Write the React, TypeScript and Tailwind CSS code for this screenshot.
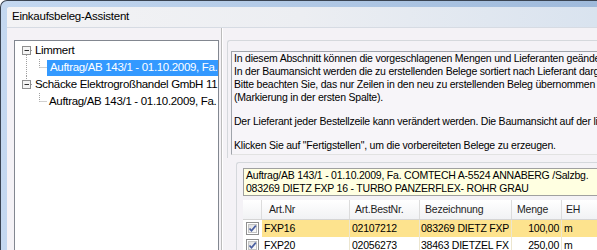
import React from 'react'

const rows = [
    { nr: 'FXP16', best: '02107212', bez: '083269 DIETZ FXP', menge: '100,00', eh: 'm', sel: true },
    { nr: 'FXP20', best: '02056273', bez: '38463 DIETZEL FX', menge: '250,00', eh: 'm', sel: false },
]

function Check() {
    return (
        <svg width="13" height="13" viewBox="0 0 13 13">
            <defs>
                <linearGradient id="cb" x1="0" y1="0" x2="1" y2="1">
                    <stop offset="0" stopColor="#dcdcdc" />
                    <stop offset="1" stopColor="#ffffff" />
                </linearGradient>
            </defs>
            <rect x="0.5" y="0.5" width="12" height="12" fill="#fff" stroke="#8f8f8f" />
            <rect x="2.5" y="2.5" width="8" height="8" fill="url(#cb)" stroke="#c4c4c4" />
            <path d="M3.5 6.5 L5.5 8.8 L9.8 3.6" fill="none" stroke="#4a5fa0" strokeWidth="1.7" />
        </svg>
    )
}

// +/- box with tree lines for root level items
function RootGlyph({ first }: { first: boolean }) {
    return (
        <svg width="18" height="17" className="shrink-0">
            {!first && <line x1="11.5" y1="0" x2="11.5" y2="4" stroke="#a0a0a0" strokeDasharray="1 1" />}
            {first && <line x1="11.5" y1="13" x2="11.5" y2="17" stroke="#a0a0a0" strokeDasharray="1 1" />}
            <line x1="16" y1="8.5" x2="18" y2="8.5" stroke="#a0a0a0" strokeDasharray="1 1" />
            <rect x="7.5" y="4.5" width="8" height="8" fill="#f4f4f4" stroke="#8f8f8f" />
            <line x1="9.5" y1="8.5" x2="14" y2="8.5" stroke="#303030" />
        </svg>
    )
}

function ChildGlyph({ trunk }: { trunk: boolean }) {
    return (
        <svg width="32" height="17" className="shrink-0">
            {trunk && <line x1="11.5" y1="0" x2="11.5" y2="17" stroke="#a0a0a0" strokeDasharray="1 1" />}
            <line x1="24.5" y1="0" x2="24.5" y2="8.5" stroke="#a0a0a0" strokeDasharray="1 1" />
            <line x1="24.5" y1="8.5" x2="32" y2="8.5" stroke="#a0a0a0" strokeDasharray="1 1" />
        </svg>
    )
}

export default function App() {
    return (
        <div className="w-[597px] h-[250px] overflow-hidden bg-white font-['Liberation_Sans',Arial,sans-serif] text-black">
            <div className="h-full rounded-tl-[7px] border-l border-t border-[#3a4452] bg-gradient-to-r from-[#c4d8f0] to-[#9fbadb] pl-[6px] pt-[6px]">
                <div className="h-full flex flex-col rounded-tl-[3px] bg-[#f4f2f6]">
                    {/* wizard caption */}
                    <div className="h-[21px] shrink-0 flex items-center pl-[5px] border-b border-[#d6dbe3] bg-gradient-to-r from-[#f3f3f5] via-[#eceef2] to-[#d9e3ef] text-[11.5px] tracking-[-0.25px] rounded-tl-[3px]">
                        Einkaufsbeleg-Assistent
                    </div>
                    <div className="flex-1 flex pt-[12px] pl-[7px] min-h-0">
                        {/* tree */}
                        <div className="w-[205px] shrink-0 bg-white border border-[#828790] border-b-0 pt-[1px] text-[11.5px] tracking-[-0.32px] overflow-hidden">
                            <div className="flex items-center h-[17px]">
                                <RootGlyph first={true} />
                                <span className="ml-[2px]">Limmert</span>
                            </div>
                            <div className="flex items-center h-[17px]">
                                <ChildGlyph trunk={true} />
                                <span className="flex-1 h-[16px] flex items-center px-[3px] bg-[#3399ff] text-white whitespace-nowrap">Auftrag/AB 143/1 - 01.10.2009, Fa.</span>
                            </div>
                            <div className="flex items-center h-[17px]">
                                <RootGlyph first={false} />
                                <span className="ml-[2px] whitespace-nowrap">Schäcke Elektrogroßhandel GmbH 11</span>
                            </div>
                            <div className="flex items-center h-[17px]">
                                <ChildGlyph trunk={false} />
                                <span className="px-[2px] whitespace-nowrap">Auftrag/AB 143/1 - 01.10.2009, Fa.</span>
                            </div>
                        </div>
                        {/* splitter */}
                        <div className="ml-[2px] w-[2px] shrink-0 -mt-[12px] border-l border-[#bcbcbc] border-r border-r-white" />
                        {/* right side */}
                        <div className="ml-[4px] flex-1 min-w-0 flex flex-col text-[10.5px] tracking-[-0.22px]">
                            <div className="rounded-tl-[3px] border-l border-t border-[#d5d8dc] pt-[10px] pl-[3px] pb-[3px]">
                                <div className="h-[104px] border-l border-t border-[#a0a4ab] border-b border-b-[#e2e2e2] bg-[#f7f5f9] pl-[2px] leading-[13px] whitespace-nowrap overflow-hidden">
                                    <div>In diesem Abschnitt können die vorgeschlagenen Mengen und Lieferanten geändert werden.</div>
                                    <div>In der Baumansicht werden die zu erstellenden Belege sortiert nach Lieferant dargestellt.</div>
                                    <div>Bitte beachten Sie, das nur Zeilen in den neu zu erstellenden Beleg übernommen werden,</div>
                                    <div>(Markierung in der ersten Spalte).</div>
                                    <div className="mt-[11px]">Der Lieferant jeder Bestellzeile kann verändert werden. Die Baumansicht auf der linken Seite</div>
                                    <div className="mt-[11px]">Klicken Sie auf "Fertigstellen", um die vorbereiteten Belege zu erzeugen.</div>
                                </div>
                            </div>
                            <div className="ml-[9px] mt-[4px] flex-1 rounded-tl-[3px] border-l border-t border-[#d5d8dc] pt-[5px] pl-[6px]">
                                <div className="h-[28px] border border-r-0 border-[#a0a0a0] bg-[#ffffe1] pl-[2px] leading-[13px] whitespace-nowrap overflow-hidden">
                                    <div>Auftrag/AB 143/1 - 01.10.2009, Fa. COMTECH A-5524 ANNABERG /Salzbg.</div>
                                    <div>083269 DIETZ FXP 16 - TURBO PANZERFLEX- ROHR GRAU</div>
                                </div>
                                {/* grid */}
                                <div className="mt-[4px] bg-white whitespace-nowrap">
                                    <div className="flex h-[20px] items-center bg-gradient-to-b from-white to-[#f1f2f4] border-b border-[#d5d5d5] text-[#1e1e1e]">
                                        <div className="w-[19px] h-full shrink-0 border-r border-[#dcdcdc]" />
                                        <div className="w-[88px] h-full shrink-0 flex items-center pl-[7px] border-r border-[#dcdcdc]">Art.Nr</div>
                                        <div className="w-[70px] h-full shrink-0 flex items-center pl-[5px] border-r border-[#dcdcdc]">Art.BestNr.</div>
                                        <div className="w-[92px] h-full shrink-0 flex items-center pl-[5px] border-r border-[#dcdcdc]">Bezeichnung</div>
                                        <div className="w-[50px] h-full shrink-0 flex items-center pl-[5px] border-r border-[#dcdcdc]">Menge</div>
                                        <div className="flex-1 h-full flex items-center pl-[4px]">EH</div>
                                    </div>
                                    {rows.map((r) => (
                                        <div key={r.nr} className="flex h-[17px] items-center">
                                            <div className="w-[19px] h-full shrink-0 flex items-center justify-center">
                                                <Check />
                                            </div>
                                            <div className={(r.sel ? 'bg-[#fde38e] ' : '') + 'flex-1 h-full flex'}>
                                                <div className="w-[88px] h-full shrink-0 flex items-center pl-[2px] border-r border-[#ece6cf]">{r.nr}</div>
                                                <div className="w-[70px] h-full shrink-0 flex items-center pl-[2px] border-r border-[#ece6cf]">{r.best}</div>
                                                <div className="w-[92px] h-full shrink-0 flex items-center pl-[1px] border-r border-[#ece6cf] overflow-hidden">{r.bez}</div>
                                                <div className="w-[50px] h-full shrink-0 flex items-center justify-end pr-[2px] border-r border-[#ece6cf]">{r.menge}</div>
                                                <div className="flex-1 h-full flex items-center pl-[2px]">{r.eh}</div>
                                            </div>
                                        </div>
                                    ))}
                                </div>
                            </div>
                        </div>
                    </div>
                </div>
            </div>
        </div>
    )
}
